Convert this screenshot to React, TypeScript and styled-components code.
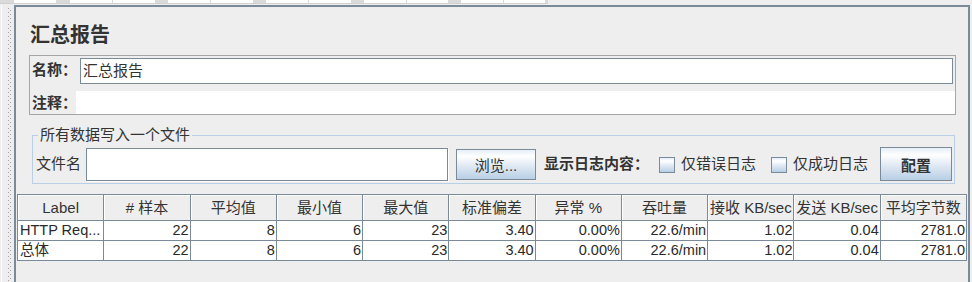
import React from 'react';
import styled, { createGlobalStyle } from 'styled-components';

const GlobalStyle = createGlobalStyle`
  html, body { margin: 0; padding: 0; background: #eeeeee; }
  body {
    font-family: "Liberation Sans", "Noto Sans CJK SC", sans-serif;
    color: #333333;
  }
  * { box-sizing: border-box; }
`;

const FONT = `"Liberation Sans", "Noto Sans CJK SC", sans-serif`;

const Page = styled.div`
  width: 972px;
  height: 282px;
  overflow: hidden;
  display: flex;
  flex-direction: column;
  background: #eeeeee;
`;

const TopStrip = styled.div`
  height: 5px;
  flex-shrink: 0;
  display: flex;
  align-items: flex-start;
`;

const StripTrack = styled.div`
  display: flex;
  width: 548px;
  height: 4px;
  background: #dadada;
  border-bottom: 1px solid #d0d0d0;
`;

const StripBlock = styled.div<{ $w: number; $white?: boolean }>`
  width: ${(p) => p.$w}px;
  height: 3px;
  flex-shrink: 0;
  background: ${(p) => (p.$white ? '#ffffff' : '#dadada')};
`;

const Body = styled.div`
  flex: 1;
  display: flex;
  min-height: 0;
`;

const Gutter = styled.div`
  width: 14px;
  flex-shrink: 0;
  background:
    linear-gradient(#fbfbfb, #fbfbfb) 1px 0 / 1px 100% no-repeat,
    repeating-linear-gradient(to bottom, #9aa5b1 0 1px, transparent 1px 4px) 8px 3px / 1px 100% no-repeat,
    repeating-linear-gradient(to bottom, #9aa5b1 0 1px, transparent 1px 4px) 10px 5px / 1px 100% no-repeat;
`;

const Panel = styled.div`
  width: 956px;
  flex-shrink: 0;
  border: 2px solid #7a8a99;
  border-bottom: none;
  display: flex;
  flex-direction: column;
`;

const Title = styled.div`
  margin: 16px 0 0 14px;
  font-size: 20px;
  line-height: 24px;
  font-weight: bold;
  color: #333;
`;

const NameBox = styled.div`
  margin: 8px 12px 0 13px;
  height: 60px;
  border: 1px solid #a5a5a5;
  display: flex;
  flex-direction: column;
`;

const NameRow = styled.div`
  height: 28px;
  display: flex;
  align-items: flex-end;
  padding: 0 2px 0 2px;
`;

const CommentRow = styled.div`
  height: 23px;
  margin-top: 7px;
  display: flex;
  align-items: stretch;
  padding-left: 2px;
`;

const FieldLabel = styled.div<{ $w: number }>`
  width: ${(p) => p.$w}px;
  flex-shrink: 0;
  align-self: center;
  font-size: 15px;
  line-height: 18px;
  font-weight: bold;
  color: #333;
  white-space: nowrap;
`;

const NameInput = styled.div`
  flex: 1;
  height: 26px;
  border: 1px solid #7a8a99;
  background: #ffffff;
  padding: 0 2px;
  font-size: 15px;
  line-height: 24px;
  color: #333;
`;

const CommentArea = styled.div`
  flex: 1;
  background: #ffffff;
`;

const FileSet = styled.fieldset`
  margin: 11px 0 0 16px;
  width: 923px;
  padding: 3px 2px 2px 3px;
  border: 1px solid #b8cfe5;
  min-width: 0;
`;

const FileLegend = styled.legend`
  margin-left: 2px;
  padding: 0 2px;
  font-size: 15px;
  line-height: 18px;
  color: #333;
`;

const FileRow = styled.div`
  height: 34px;
  display: flex;
  align-items: center;
`;

const PlainLabel = styled.div<{ $w?: number; $bold?: boolean; $ml?: number }>`
  ${(p) => (p.$w ? `width: ${p.$w}px; flex-shrink: 0;` : '')}
  margin-left: ${(p) => p.$ml ?? 0}px;
  font-size: 15px;
  line-height: 18px;
  font-weight: ${(p) => (p.$bold ? 'bold' : 'normal')};
  color: #333;
  white-space: nowrap;
`;

const FileInput = styled.div`
  width: 362px;
  height: 33px;
  flex-shrink: 0;
  background: #ffffff;
  border: 1px solid #7a8a99;
  box-shadow: 1px 1px 0 #ffffff;
`;

const oceanGradient = `linear-gradient(to bottom, #e6eef7 0%, #ffffff 22%, #e4ecf5 50%, #b8cfe5 100%)`;

const Button = styled.div<{ $w: number; $h: number; $ml?: number; $bold?: boolean; $auto?: boolean }>`
  width: ${(p) => p.$w}px;
  height: ${(p) => p.$h}px;
  flex-shrink: 0;
  margin-left: ${(p) => (p.$auto ? 'auto' : `${p.$ml ?? 0}px`)};
  border: 1px solid #7a8a99;
  background: ${oceanGradient};
  display: flex;
  align-items: center;
  justify-content: center;
  font-size: 15px;
  font-weight: ${(p) => (p.$bold ? 'bold' : 'normal')};
  color: #333;
`;

const CheckItem = styled.div<{ $ml: number }>`
  display: flex;
  align-items: center;
  flex-shrink: 0;
  margin-left: ${(p) => p.$ml}px;
`;

const CheckBox = styled.div`
  width: 16px;
  height: 16px;
  border: 1px solid #7a8a99;
  background: ${oceanGradient};
  margin-right: 6px;
  margin-top: 1px;
`;

const Table = styled.div`
  margin: 10px 0 0 1px;
  width: 950px;
  display: grid;
  grid-template-columns: repeat(11, 1fr);
  border-top: 1px solid #7a8a99;
  border-left: 1px solid #7a8a99;
`;

const HeadCell = styled.div`
  height: 26px;
  border-right: 1px solid #7a8a99;
  border-bottom: 1px solid #7a8a99;
  background: #eeeeee;
  box-shadow: inset 1px 1px 0 #ffffff;
  font-size: 15px;
  line-height: 25px;
  text-align: center;
  white-space: nowrap;
  overflow: hidden;
  color: #333;
`;

const DataCell = styled.div<{ $left?: boolean }>`
  height: 20px;
  border-right: 1px solid #7a8a99;
  border-bottom: 1px solid #7a8a99;
  background: #ffffff;
  font-size: 14.5px;
  line-height: 19px;
  text-align: ${(p) => (p.$left ? 'left' : 'right')};
  padding: ${(p) => (p.$left ? '0 0 0 2px' : '0 1px 0 0')};
  white-space: nowrap;
  overflow: hidden;
  color: #2a2a2a;
  font-family: ${FONT};
`;

const strip: Array<[number, boolean]> = [
  [14, false], [42, true], [14, false], [42, true], [1, false], [42, true],
  [13, false], [42, true], [1, false], [42, true], [13, false], [42, true],
  [1, false], [42, true], [13, false], [42, true], [1, false], [41, true],
  [13, false], [42, true], [1, false], [41, true], [3, false],
];

const headers = ['Label', '# 样本', '平均值', '最小值', '最大值', '标准偏差', '异常 %', '吞吐量', '接收 KB/sec', '发送 KB/sec', '平均字节数'];

const rows = [
  ['HTTP Req...', '22', '8', '6', '23', '3.40', '0.00%', '22.6/min', '1.02', '0.04', '2781.0'],
  ['总体', '22', '8', '6', '23', '3.40', '0.00%', '22.6/min', '1.02', '0.04', '2781.0'],
];

export default function App() {
  return (
    <>
      <GlobalStyle />
      <Page>
        <TopStrip>
          <StripTrack>
            {strip.map(([w, white], i) => (
              <StripBlock key={i} $w={w} $white={white} />
            ))}
          </StripTrack>
        </TopStrip>
        <Body>
          <Gutter />
          <Panel>
            <Title>汇总报告</Title>
            <NameBox>
              <NameRow>
                <FieldLabel $w={48}>名称：</FieldLabel>
                <NameInput>汇总报告</NameInput>
              </NameRow>
              <CommentRow>
                <FieldLabel $w={44}>注释：</FieldLabel>
                <CommentArea />
              </CommentRow>
            </NameBox>
            <FileSet>
              <FileLegend>所有数据写入一个文件</FileLegend>
              <FileRow>
                <PlainLabel $w={50}>文件名</PlainLabel>
                <FileInput />
                <Button $w={80} $h={31} $ml={8}>浏览...</Button>
                <PlainLabel $bold $ml={8}>显示日志内容：</PlainLabel>
                <CheckItem $ml={10}>
                  <CheckBox />
                  <PlainLabel>仅错误日志</PlainLabel>
                </CheckItem>
                <CheckItem $ml={15}>
                  <CheckBox />
                  <PlainLabel>仅成功日志</PlainLabel>
                </CheckItem>
                <Button $w={72} $h={34} $bold $auto>配置</Button>
              </FileRow>
            </FileSet>
            <Table>
              {headers.map((h) => (
                <HeadCell key={h}>{h}</HeadCell>
              ))}
              {rows.map((r, ri) =>
                r.map((c, ci) => (
                  <DataCell key={`${ri}-${ci}`} $left={ci === 0}>
                    {c}
                  </DataCell>
                ))
              )}
            </Table>
          </Panel>
        </Body>
      </Page>
    </>
  );
}
